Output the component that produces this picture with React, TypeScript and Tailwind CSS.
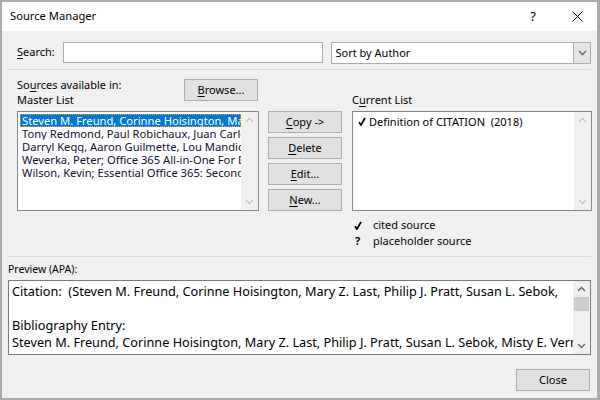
import React from 'react';

const FONT = "font-['Noto_Sans',sans-serif]";

function U({ children }: { children: React.ReactNode }) {
  return <span className="underline underline-offset-2">{children}</span>;
}

function Btn({ children, className = '' }: { children: React.ReactNode; className?: string }) {
  return (
    <button
      className={`flex h-[22px] w-[74px] shrink-0 items-center justify-center border border-[#adadad] bg-[#e1e1e1] text-[11px] text-black ${className}`}
    >
      {children}
    </button>
  );
}

function Chevron({ up, color = '#c4c4c4' }: { up?: boolean; color?: string }) {
  return (
    <svg width="9" height="6" viewBox="0 0 9 6" fill="none">
      <polyline
        points={up ? '1,5 4.5,1.5 8,5' : '1,1 4.5,4.5 8,1'}
        stroke={color}
        strokeWidth="1.3"
      />
    </svg>
  );
}

function Check() {
  return (
    <svg width="8" height="9" viewBox="0 0 8 9" fill="none">
      <path d="M1 5.2 L3 8 L7 1" stroke="#000" strokeWidth="1.7" />
    </svg>
  );
}

function Scrollbar({ dark }: { dark?: boolean }) {
  return (
    <div className="flex w-[17px] shrink-0 flex-col items-center justify-between bg-[#f0f0f0] py-[5px]">
      <Chevron up color={dark ? '#606060' : '#c4c4c4'} />
      <Chevron color={dark ? '#606060' : '#c4c4c4'} />
    </div>
  );
}

const MASTER = [
  'Steven M. Freund, Corinne Hoisington, Mary Z. Last',
  'Tony Redmond, Paul Robichaux, Juan Carlos González',
  'Darryl Kegg, Aaron Guilmette, Lou Mandich',
  'Weverka, Peter; Office 365 All-in-One For Dummies',
  'Wilson, Kevin; Essential Office 365: Second Edition',
];

export default function App() {
  return (
    <div
      className={`${FONT} flex h-[400px] w-[600px] flex-col overflow-hidden border-2 border-r-[3px] border-[#ababab] bg-[#f0f0f0] text-black`}
    >
      {/* Title bar */}
      <div className="flex h-[29px] shrink-0 items-center bg-white pl-[8px] pr-[14px]">
        <span className="text-[11.2px]">Source Manager</span>
        <span className="ml-auto mr-[36px] text-[13px]">?</span>
        <svg width="11" height="11" viewBox="0 0 11 11">
          <path d="M0.5 0.5 L10.5 10.5 M10.5 0.5 L0.5 10.5" stroke="#000" strokeWidth="1" />
        </svg>
      </div>

      <div className="flex flex-1 flex-col px-[6px]">
        {/* Search row */}
        <div className="mt-[11px] flex h-[21px] items-center pl-[9px] text-[11px]">
          <span className="w-[46px]">
            <U>S</U>earch:
          </span>
          <div className="h-[21px] w-[261px] border border-[#acacac] bg-white" />
          <div className="ml-[8px] flex h-[22px] w-[260px] border border-[#acacac] bg-white">
            <span className="flex-1 pl-[3px] leading-[20px]">Sort by Author</span>
            <div className="flex w-[17px] items-center justify-center border-l border-[#acacac] bg-[#e5e5e5]">
              <Chevron color="#606060" />
            </div>
          </div>
        </div>

        <div className="mt-[6px] h-px bg-[#dadada]" />

        {/* Lists */}
        <div className="flex pl-[9px] text-[11px]">
          <div className="flex w-[242px] shrink-0 flex-col">
            <div className="flex items-start justify-between">
              <div className="mt-[7px] leading-[15px]">
                <div>
                  So<U>u</U>rces available in:
                </div>
                <div>Master List</div>
              </div>
              <Btn className="mr-[1px] mt-[9px]">
                <span>
                  <U>B</U>rowse...
                </span>
              </Btn>
            </div>
            <div className="mt-[4px] flex h-[100px] border border-[#828790] bg-white">
              <div className="min-w-0 flex-1 overflow-hidden pl-[2px] pt-[2px] text-[11.2px] leading-[13px]">
                {MASTER.map((m, i) => (
                  <div
                    key={m}
                    className={`overflow-hidden whitespace-nowrap pl-[2px] ${
                      i === 0
                        ? 'bg-[#0078d7] text-white outline-1 outline-dotted outline-[#ff9b00] -outline-offset-1'
                        : 'text-[#101030]'
                    }`}
                  >
                    {m}
                  </div>
                ))}
              </div>
              <Scrollbar />
            </div>
          </div>

          <div className="ml-[9px] mt-[41px] flex flex-col gap-[4px]">
            <Btn>
              <span>
                <U>C</U>opy -&gt;
              </span>
            </Btn>
            <Btn>
              <span>
                <U>D</U>elete
              </span>
            </Btn>
            <Btn>
              <span>
                <U>E</U>dit...
              </span>
            </Btn>
            <Btn>
              <span>
                <U>N</U>ew...
              </span>
            </Btn>
          </div>

          <div className="ml-[10px] flex w-[240px] shrink-0 flex-col">
            <div className="mt-[22px] leading-[15px]">
              C<U>u</U>rrent List
            </div>
            <div className="mt-[4px] flex h-[100px] border border-[#828790] bg-white">
              <div className="flex min-w-0 flex-1 items-start gap-[3px] pl-[5px] pt-[2px] leading-[15px]">
                <span className="mt-[3px]">
                  <Check />
                </span>
                <span>Definition of CITATION&nbsp; (2018)</span>
              </div>
              <Scrollbar />
            </div>
            <div className="mt-[6px] flex flex-col pl-[2px] leading-[16px]">
              <div className="flex items-center">
                <span className="w-[19px]">
                  <Check />
                </span>
                cited source
              </div>
              <div className="flex items-center">
                <span className="w-[19px] pl-[1px] font-bold">?</span>
                placeholder source
              </div>
            </div>
          </div>
        </div>

        <div className="mt-[7px] h-px bg-[#dadada]" />

        {/* Preview */}
        <div className="mt-[6px] text-[10.5px] leading-[13px]">Preview (APA):</div>
        <div className="mt-[4px] flex h-[75px] border border-[#7a7a7a] bg-white">
          <div className="min-w-0 flex-1 overflow-hidden pl-[3px] pt-[2px] text-[12.7px] leading-[17px]">
            <div className="whitespace-nowrap">
              Citation:&nbsp; (Steven M. Freund, Corinne Hoisington, Mary Z. Last, Philip J. Pratt, Susan L. Sebok,
            </div>
            <div>&nbsp;</div>
            <div>Bibliography Entry:</div>
            <div className="whitespace-nowrap">
              Steven M. Freund, Corinne Hoisington, Mary Z. Last, Philip J. Pratt, Susan L. Sebok, Misty E. Vermaat
            </div>
          </div>
          <div className="flex w-[17px] shrink-0 flex-col items-center bg-[#f0f0f0] py-[5px]">
            <Chevron up color="#606060" />
            <div className="mt-[5px] h-[14px] w-[15px] bg-[#cdcdcd]" />
            <div className="mt-auto">
              <Chevron color="#606060" />
            </div>
          </div>
        </div>

        <div className="mt-[14px] flex justify-end pr-[1px]">
          <Btn>Close</Btn>
        </div>
      </div>
    </div>
  );
}
